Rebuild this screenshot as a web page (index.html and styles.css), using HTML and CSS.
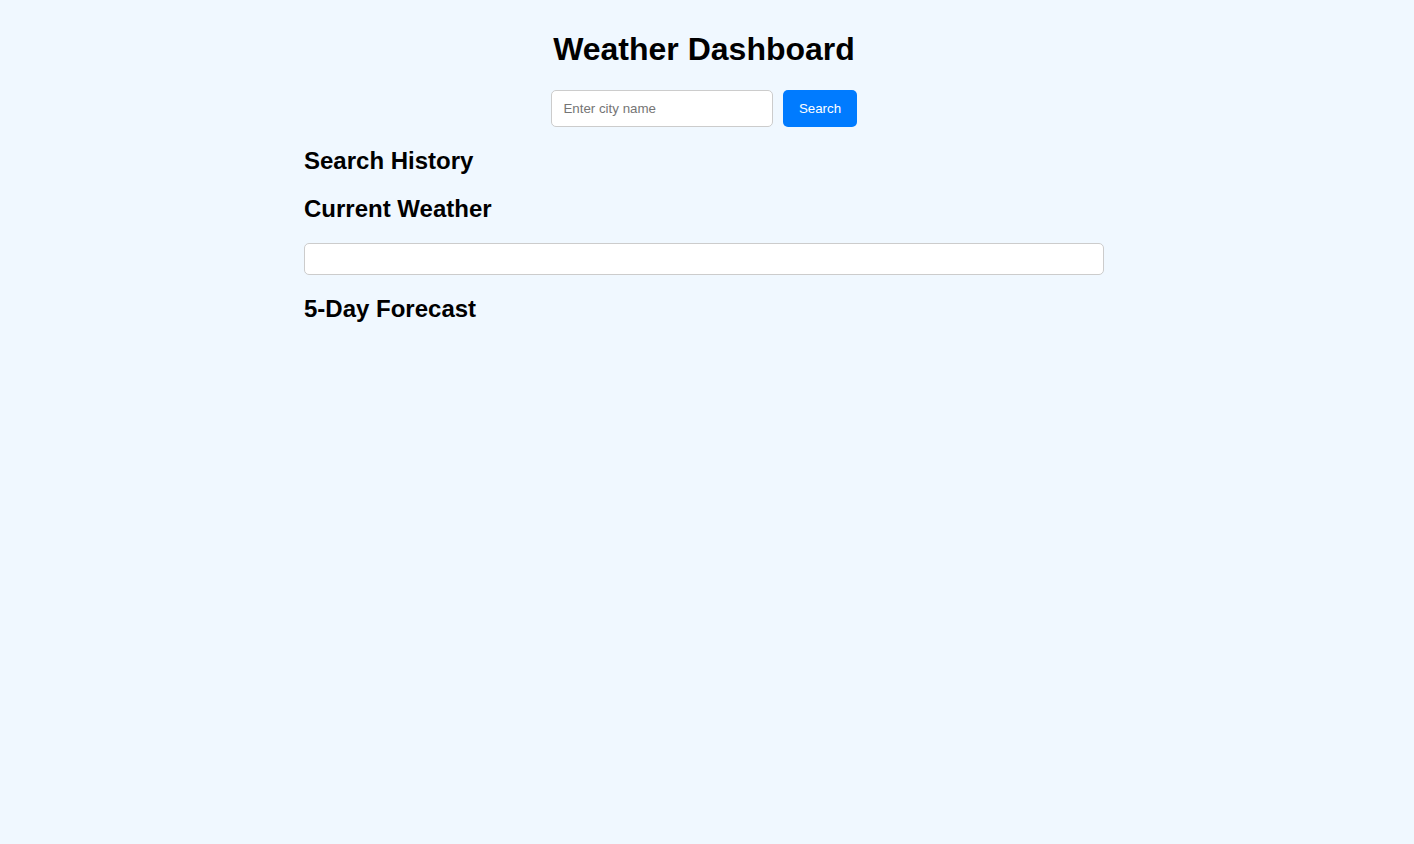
FILE: index.html
```html
<!DOCTYPE html>
<html lang="en">
<head>
<meta charset="UTF-8">
<title>Weather Dashboard</title>
<link rel="stylesheet" href="styles.css">
</head>
<body>
<div class="container">
  <h1 class="title">Weather Dashboard</h1>
  <div class="search">
    <input class="search-input" type="text" placeholder="Enter city name">
    <button class="search-btn">Search</button>
  </div>
  <h2 class="section-title">Search History</h2>
  <div class="history"></div>
  <h2 class="section-title">Current Weather</h2>
  <div class="current"></div>
  <h2 class="section-title">5-Day Forecast</h2>
  <div class="forecast"></div>
</div>
</body>
</html>
```
FILE: styles.css
```css
html, body {
  background: #f0f8ff;
}
body {
  margin: 9px 14px 8px 8px;
  font-family: "Liberation Sans", Arial, sans-serif;
  color: #000;
}
.container {
  max-width: 800px;
  margin: 0 auto;
}
.title {
  text-align: center;
  font-size: 32px;
  margin: 22px 0 22px;
}
.search {
  display: flex;
  justify-content: center;
  gap: 10px;
  margin-bottom: 20px;
}
.search-input {
  width: 200px;
  padding: 10px 9px 10px 11px;
  border: 1px solid #ccc;
  border-radius: 5px;
  font-family: "Liberation Sans", Arial, sans-serif;
  font-size: 13.333px;
  background: #fff;
  outline: none;
}
.search-input::placeholder {
  color: #757575;
}
.search-btn {
  padding: 10px 15.5px;
  border: none;
  border-radius: 5px;
  background: #007bff;
  color: #fff;
  font-family: "Liberation Sans", Arial, sans-serif;
  font-size: 13.333px;
  cursor: pointer;
}
.section-title {
  font-size: 24px;
  margin: 20px 0;
}
.current {
  background: #fff;
  border: 1px solid #ccc;
  border-radius: 5px;
  padding: 15px;
}
```
